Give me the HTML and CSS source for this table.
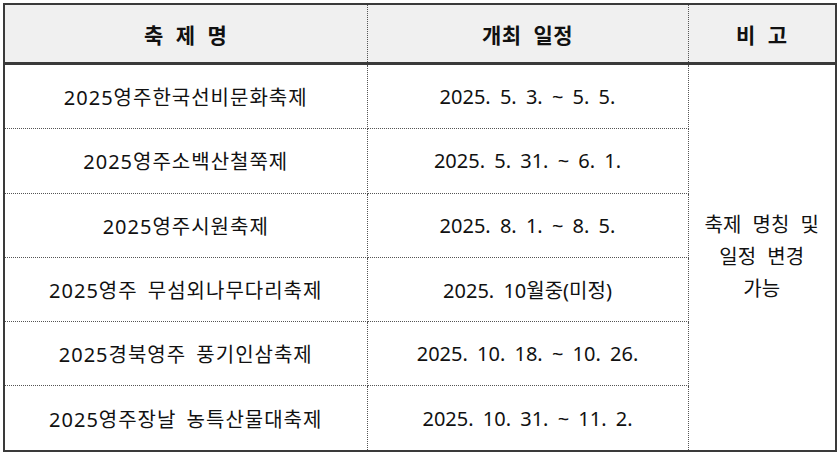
FILE: index.html
```html
<!DOCTYPE html>
<html lang="ko">
<head>
<meta charset="utf-8">
<link rel="stylesheet" href="styles.css">
</head>
<body>
<table class="fest">
  <colgroup>
    <col class="c1"><col class="c2"><col class="c3">
  </colgroup>
  <thead>
    <tr><th>축 제 명</th><th>개최 일정</th><th>비 고</th></tr>
  </thead>
  <tbody>
    <tr><td class="name">2025영주한국선비문화축제</td><td>2025. 5. 3. ~ 5. 5.</td><td class="note" rowspan="6">축제 명칭 및<br>일정 변경<br>가능</td></tr>
    <tr><td class="name">2025영주소백산철쭉제</td><td>2025. 5. 31. ~ 6. 1.</td></tr>
    <tr><td class="name">2025영주시원축제</td><td>2025. 8. 1. ~ 8. 5.</td></tr>
    <tr><td class="name">2025영주 무섬외나무다리축제</td><td>2025. 10월중(미정)</td></tr>
    <tr><td class="name">2025경북영주 풍기인삼축제</td><td>2025. 10. 18. ~ 10. 26.</td></tr>
    <tr><td class="name">2025영주장날 농특산물대축제</td><td>2025. 10. 31. ~ 11. 2.</td></tr>
  </tbody>
</table>
</body>
</html>
```
FILE: styles.css
```css
html, body {
  margin: 0;
  padding: 0;
  background: #ffffff;
}
body {
  padding: 3px 0 0 3px;
  font-family: "Noto Sans", "Noto Sans CJK KR", sans-serif;
  color: #111;
}
.fest {
  border-collapse: collapse;
  width: 832px;
  border: 2px solid #3a3a3a;
  table-layout: fixed;
}
.c1 { width: 363px; }
.c2 { width: 321px; }
.c3 { width: 148px; }
.fest th {
  height: 57px;
  padding: 0;
  background: #f0f0f0;
  font-size: 21px;
  font-weight: 700;
  border-bottom: 3px solid #3a3a3a;
  border-right: 1px dotted #555;
  letter-spacing: 0.5px;
  word-spacing: 6px;
}
.fest th:last-child { border-right: none; }
.fest td {
  height: 63.3px;
  padding: 0;
  text-align: center;
  font-size: 20px;
  border-right: 1px dotted #555;
  border-bottom: 1px dotted #555;
  white-space: pre;
  word-spacing: 4px;
}
.fest td.name {
  letter-spacing: 1px;
}
.fest td.note {
  border-right: none;
  white-space: normal;
  line-height: 32px;
  font-size: 20px;
  word-spacing: 6px;
}
```
